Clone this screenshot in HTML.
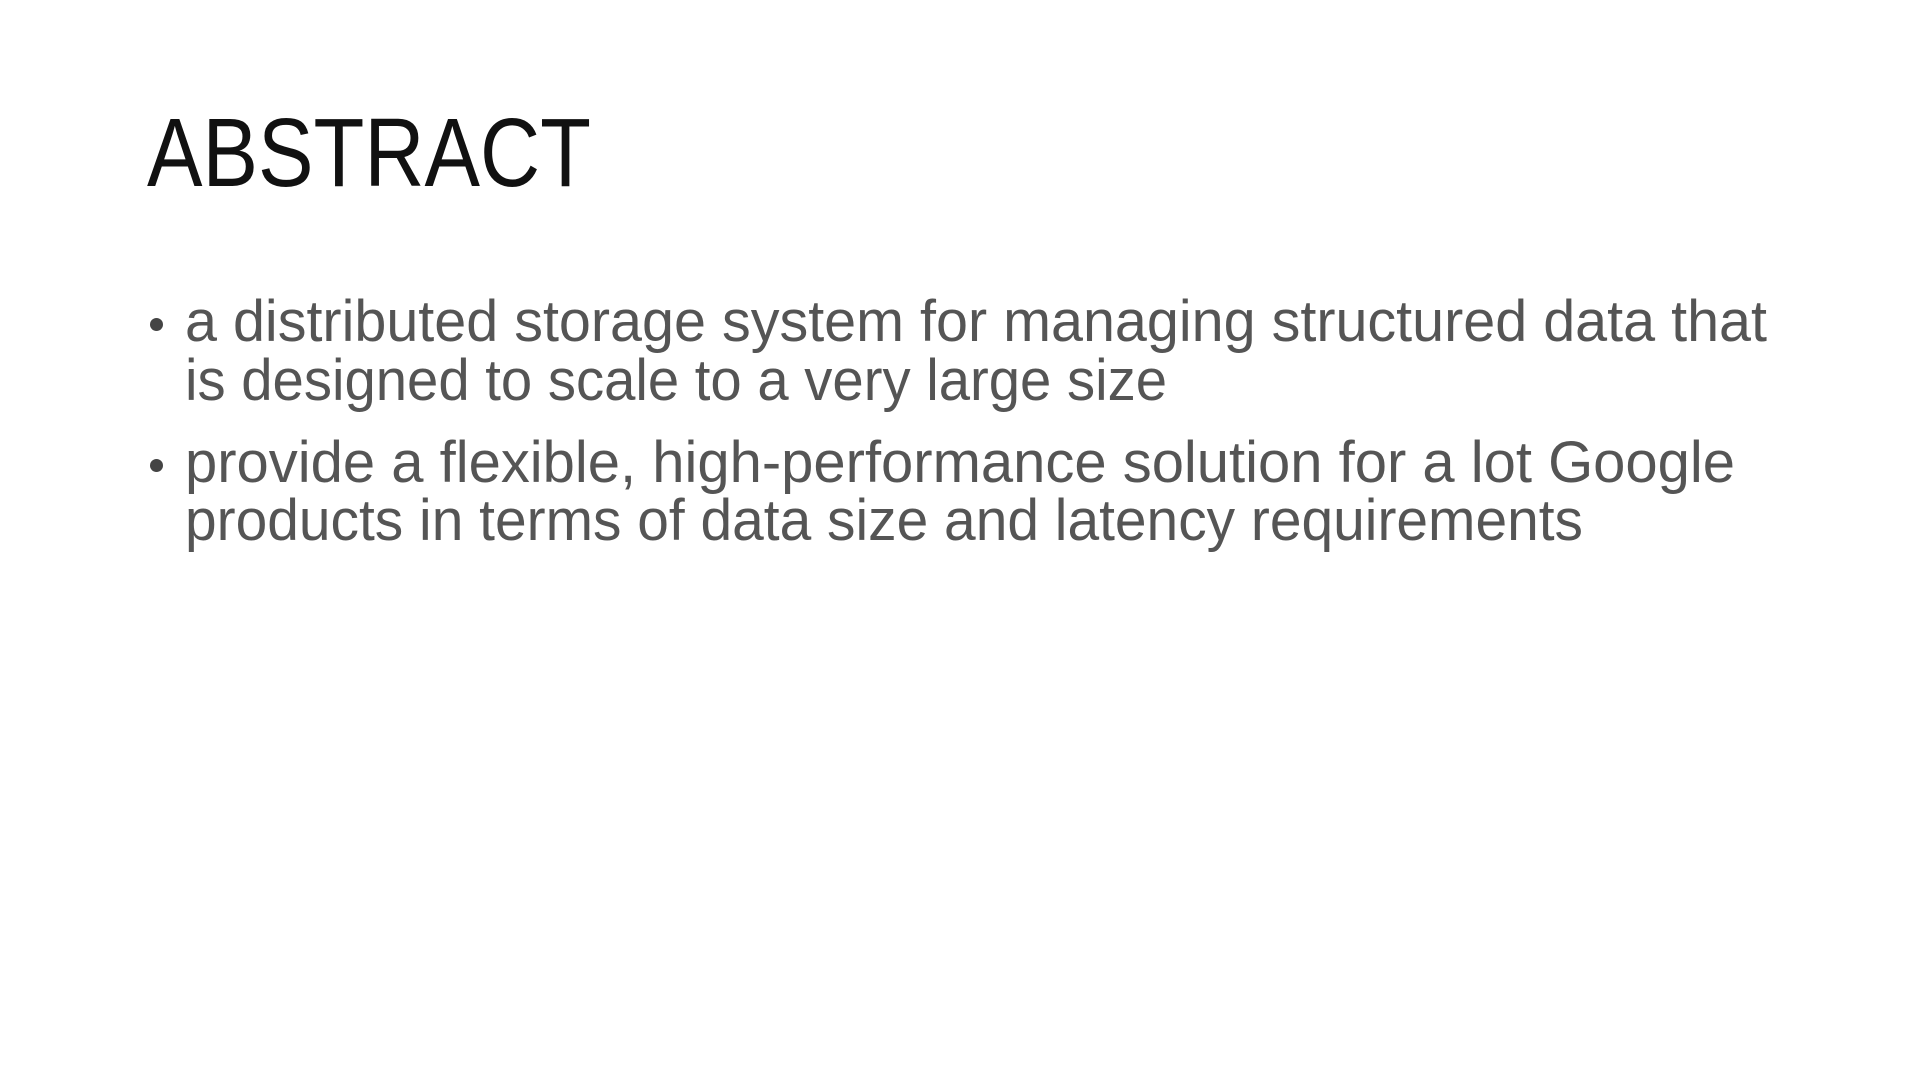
<!DOCTYPE html>
<html><head><meta charset="utf-8"><style>
html,body{margin:0;padding:0;background:#fff;width:1920px;height:1080px;overflow:hidden}
.t{position:absolute;white-space:nowrap;font-family:"Liberation Sans",sans-serif;transform-origin:0 0;font-weight:normal}
.title{left:147px;top:104px;font-size:97px;line-height:97px;color:#111}
.b{font-size:58px;line-height:58px;color:#555;left:185px}
.dot{position:absolute;width:13px;height:13px;border-radius:50%;background:#444;left:150px}
</style></head><body>
<div class="t title" data-w="444">ABSTRACT</div>
<div class="dot" style="top:318px"></div>
<div class="t b" style="top:293px" data-w="1582">a distributed storage system for managing structured data that</div>
<div class="t b" style="top:352px" data-w="982">is designed to scale to a very large size</div>
<div class="dot" style="top:459px"></div>
<div class="t b" style="top:434px" data-w="1550">provide a flexible, high-performance solution for a lot Google</div>
<div class="t b" style="top:492px" data-w="1398">products in terms of data size and latency requirements</div>
<script>
document.querySelectorAll('.t').forEach(function(e){
  var w=e.getBoundingClientRect().width, tw=+e.dataset.w;
  if(w>0) e.style.transform='scaleX('+(tw/w)+')';
});
</script>
</body></html>
